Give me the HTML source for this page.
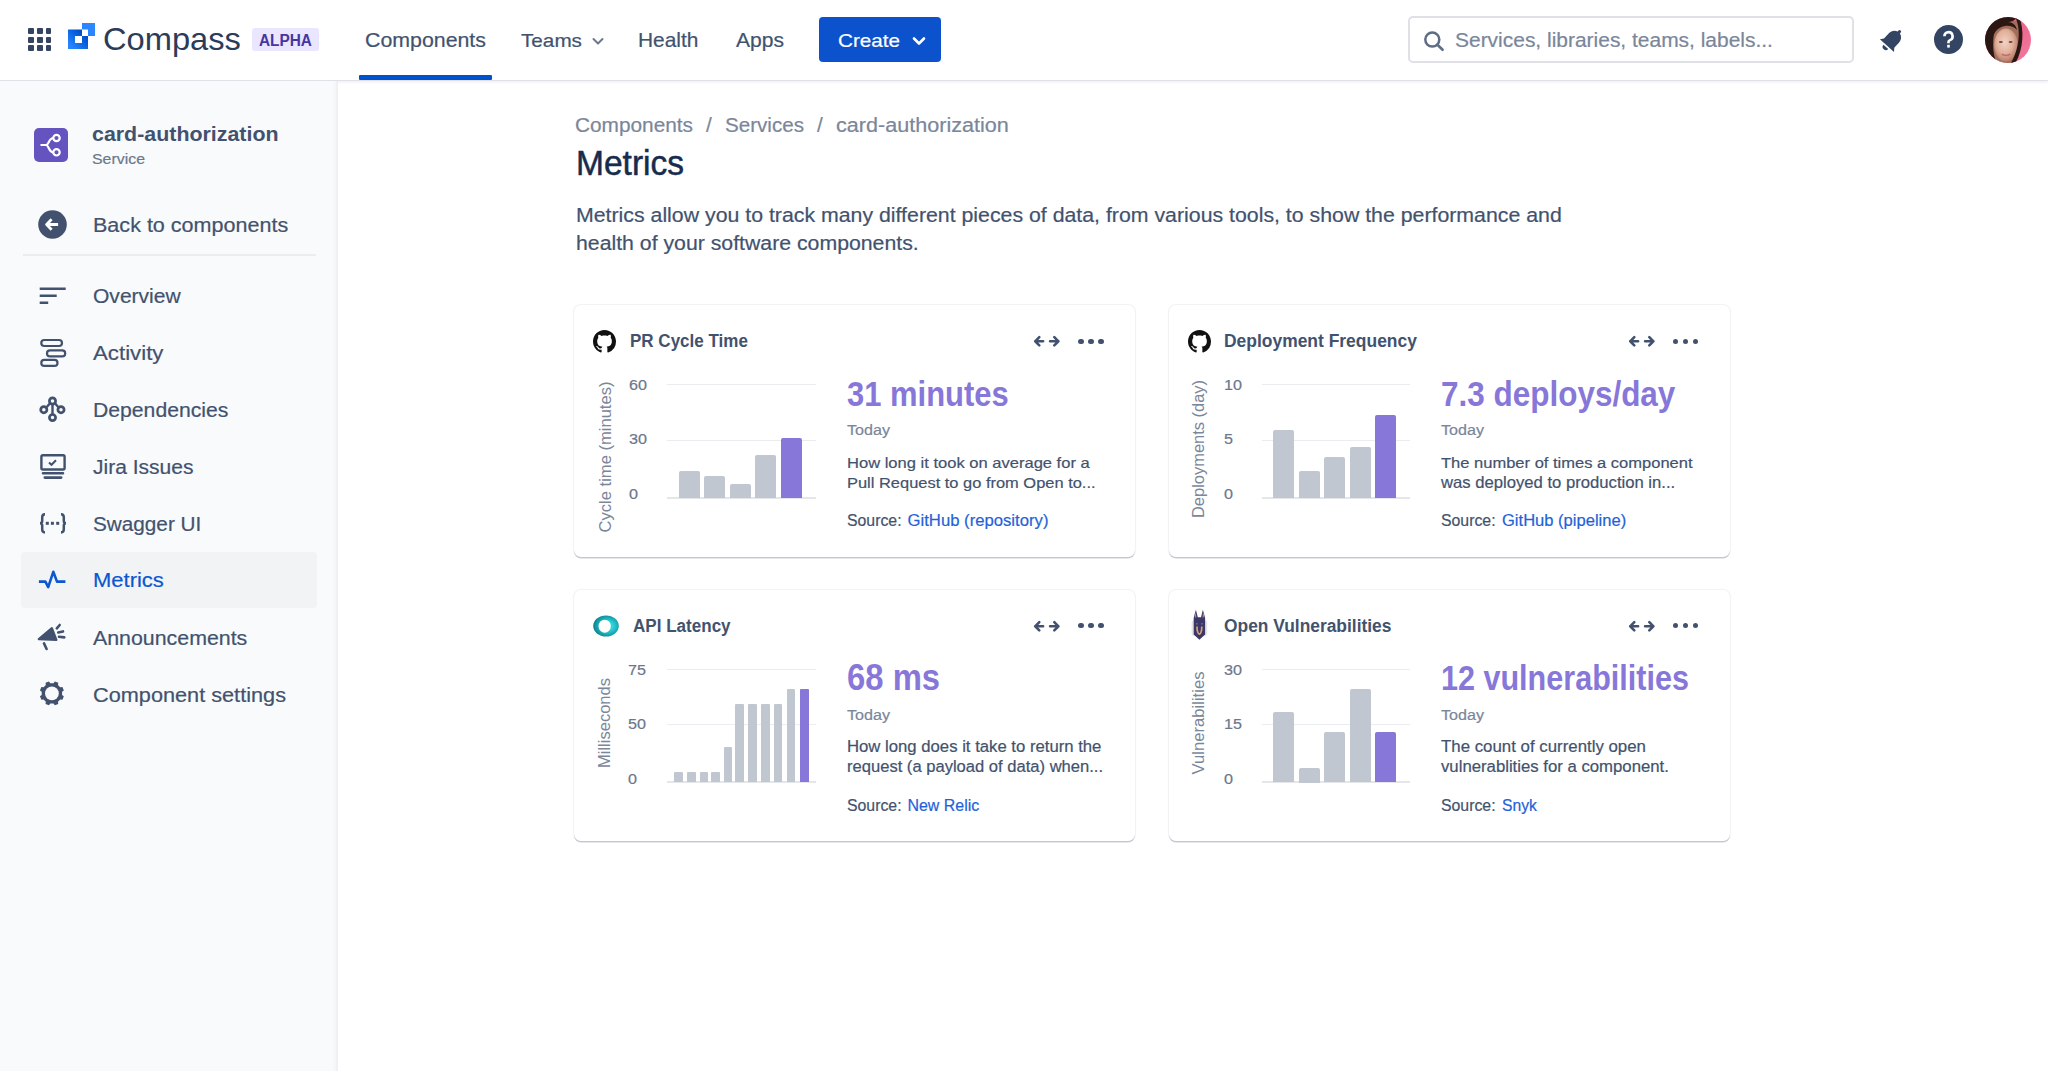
<!DOCTYPE html>
<html><head><meta charset="utf-8"><title>Compass - Metrics</title><style>
html,body{margin:0;padding:0;}
body{width:2048px;height:1071px;position:relative;overflow:hidden;background:#fff;font-family:"Liberation Sans",sans-serif;}
.t{position:absolute;white-space:nowrap;line-height:1;-webkit-text-stroke:0.2px currentColor;}
.box{position:absolute;}
#hdr{position:absolute;left:0;top:0;width:2048px;height:80px;background:#fff;box-shadow:0 1px 0 #DFE1E6,0 2px 3px rgba(9,30,66,0.08);z-index:0}
#side{position:absolute;left:0;top:81px;width:338px;height:990px;background:linear-gradient(to right,#F9FAFB 0,#F9FAFB 332px,#F3F5F7 336px,#ECEEF1 337px,#EEF0F2 338px)}
.card{position:absolute;width:561px;height:252px;border-radius:7px;background:#fff;box-shadow:0 0 1px 1px rgba(9,30,66,0.06),0 1.5px 0.6px rgba(9,30,66,0.2)}
</style></head>
<body>
<div id="hdr"></div>
<div class="box" style="left:28.2px;top:28.4px;width:5.7px;height:5.7px;border-radius:1px;background:#344563"></div>
<div class="box" style="left:28.2px;top:36.9px;width:5.7px;height:5.7px;border-radius:1px;background:#344563"></div>
<div class="box" style="left:28.2px;top:45.4px;width:5.7px;height:5.7px;border-radius:1px;background:#344563"></div>
<div class="box" style="left:36.9px;top:28.4px;width:5.7px;height:5.7px;border-radius:1px;background:#344563"></div>
<div class="box" style="left:36.9px;top:36.9px;width:5.7px;height:5.7px;border-radius:1px;background:#344563"></div>
<div class="box" style="left:36.9px;top:45.4px;width:5.7px;height:5.7px;border-radius:1px;background:#344563"></div>
<div class="box" style="left:45.6px;top:28.4px;width:5.7px;height:5.7px;border-radius:1px;background:#344563"></div>
<div class="box" style="left:45.6px;top:36.9px;width:5.7px;height:5.7px;border-radius:1px;background:#344563"></div>
<div class="box" style="left:45.6px;top:45.4px;width:5.7px;height:5.7px;border-radius:1px;background:#344563"></div>
<svg class="box" style="left:66px;top:21px" width="32" height="32" viewBox="0 0 32 32">
<defs><linearGradient id="lg1" x1="0" y1="1" x2="1" y2="0"><stop offset="0.15" stop-color="#2684FF"/><stop offset="0.75" stop-color="#0052CC"/></linearGradient>
<linearGradient id="lg2" x1="0" y1="1" x2="1" y2="0"><stop offset="0" stop-color="#2684FF"/><stop offset="1" stop-color="#2E88FF"/></linearGradient></defs>
<path fill="url(#lg1)" fill-rule="evenodd" d="M2 8.5h14v6.5h6v13h-20z M9 15h7v7h-7z"/>
<path fill="url(#lg2)" d="M16 2h13v13h-7v-6.5h-6z"/>
</svg>
<div class="t" style="left:103.00px;top:23px;font-size:32.01px;color:#2B3C5A;transform:scaleX(1.0204);transform-origin:0 0;-webkit-text-stroke:0;">Compass</div>
<div class="box" style="left:252px;top:28px;width:67px;height:23px;border-radius:3px;background:#EAE6FF"></div>
<div class="t" style="left:259.00px;top:32px;font-size:17.23px;color:#4536A0;font-weight:700;-webkit-text-stroke:0;transform:scaleX(0.8929);transform-origin:0 0;">ALPHA</div>
<div class="t" style="left:365.00px;top:31px;font-size:19.85px;color:#42526E;transform:scaleX(1.0751);transform-origin:0 0;">Components</div>
<div class="box" style="left:359px;top:75px;width:133px;height:4.5px;border-radius:1px;background:#0052CC"></div>
<div class="t" style="left:521.30px;top:31px;font-size:19.26px;color:#42526E;transform:scaleX(1.0754);transform-origin:0 0;">Teams</div>
<svg class="box" style="left:590px;top:35px" width="16" height="12" viewBox="0 0 16 12"><path d="M3.5 4l4.5 4.5 4.5-4.5" stroke="#6B778C" stroke-width="2" fill="none" stroke-linecap="round" stroke-linejoin="round"/></svg>
<div class="t" style="left:638.40px;top:31px;font-size:19.44px;color:#42526E;transform:scaleX(1.0751);transform-origin:0 0;">Health</div>
<div class="t" style="left:736.00px;top:31px;font-size:19.58px;color:#42526E;transform:scaleX(1.0752);transform-origin:0 0;">Apps</div>
<div class="box" style="left:819px;top:17px;width:122px;height:45px;border-radius:4px;background:#0C52CC"></div>
<div class="t" style="left:838.00px;top:31px;font-size:19.22px;color:#FFFFFF;transform:scaleX(1.0753);transform-origin:0 0;">Create</div>
<svg class="box" style="left:911px;top:35px" width="16" height="12" viewBox="0 0 16 12"><path d="M3 3.5l5 5 5-5" stroke="#FFFFFF" stroke-width="2.6" fill="none" stroke-linecap="round" stroke-linejoin="round"/></svg>
<div class="box" style="left:1408px;top:16px;width:446px;height:47px;border:2px solid #DFE1E6;border-radius:5px;box-sizing:border-box;background:#fff"></div>
<svg class="box" style="left:1422px;top:29px" width="24" height="24" viewBox="0 0 24 24"><circle cx="10.3" cy="10.6" r="7" stroke="#5E6C84" stroke-width="2.5" fill="none"/><path d="M15.4 15.7l5.2 5.1" stroke="#5E6C84" stroke-width="2.6" stroke-linecap="round"/></svg>
<div class="t" style="left:1455.00px;top:31px;font-size:19.49px;color:#7A869A;transform:scaleX(1.0755);transform-origin:0 0;">Services, libraries, teams, labels...</div>
<svg class="box" style="left:1876px;top:24px" width="32" height="32" viewBox="0 0 32 32">
<g transform="rotate(42 16 16)"><path fill="#344563" d="M6.5 23.5h19l-2.6-3.2v-7.3c0-3.6-2.3-6.4-5.4-7.1V4.6a1.5 1.5 0 0 0-3 0v1.3c-3.1.7-5.4 3.5-5.4 7.1v7.3z"/><path fill="#344563" d="M12.8 25.2h6.4a3.2 3.2 0 0 1-6.4 0z"/></g></svg>
<svg class="box" style="left:1934px;top:25.2px" width="29" height="29" viewBox="0 0 29 29"><circle cx="14.5" cy="14.5" r="14.5" fill="#344563"/>
<path d="M10.4 11.3a4.1 4.1 0 1 1 5.6 3.8c-1 .4-1.5 1-1.5 2v1.2" stroke="#fff" stroke-width="2.6" fill="none" stroke-linecap="butt"/><rect x="13.2" y="19.8" width="2.6" height="2.8" fill="#fff"/></svg>
<svg class="box" style="left:1985px;top:17px" width="46" height="46" viewBox="0 0 46 46">
<defs><clipPath id="av"><circle cx="23" cy="23" r="23"/></clipPath>
<radialGradient id="face" cx="0.45" cy="0.42" r="0.62"><stop offset="0" stop-color="#F2D2C4"/><stop offset="0.55" stop-color="#E2B19C"/><stop offset="1" stop-color="#B07660"/></radialGradient>
<linearGradient id="pink" x1="0" y1="0" x2="1" y2="1"><stop offset="0" stop-color="#E0507A"/><stop offset="1" stop-color="#F47CA0"/></linearGradient></defs>
<g clip-path="url(#av)">
<rect width="46" height="46" fill="url(#pink)"/>
<path d="M8 4H33C35 15 34 33 28 46H8Z" fill="#A26E5C"/>
<path d="M0 0H33C30 3 27 5 22 5.5C14 6 9.5 12 8.5 20C7.5 30 8.5 40 12 46H0Z" fill="#2A1713"/>
<ellipse cx="21" cy="28" rx="11.8" ry="16.5" fill="url(#face)"/>
<path d="M8.5 18C10 9 15 5 22 5C28 5 31 8 32 13C29 9.5 25 8.5 21 8.8C15 9.5 11 13 8.5 18Z" fill="#2A1713"/>
<path d="M30 0C35.5 9 35.5 30 26 46H30.5C38.5 32 39.5 12 34 0Z" fill="#2A1713"/>
<ellipse cx="15.8" cy="25" rx="2" ry="0.9" fill="#6A4A3E"/><ellipse cx="25.6" cy="25" rx="2" ry="0.9" fill="#6A4A3E"/>
<path d="M17.5 37.5C19.5 38.6 22.5 38.6 24.5 37.5" stroke="#C66A74" stroke-width="1.8" fill="none" stroke-linecap="round"/>
</g></svg>
<div id="side"></div>
<svg class="box" style="left:34px;top:128px" width="34" height="34" viewBox="0 0 34 34"><rect width="34" height="34" rx="5" fill="#6554C0"/>
<path d="M6.5 17h5.5C15 17 14.5 10 19.5 10 M12 17C15 17 14.5 24.3 19.5 24.3" stroke="#fff" stroke-width="2.2" fill="none"/><circle cx="22.5" cy="10" r="3.2" fill="#6554C0" stroke="#fff" stroke-width="2.2"/><circle cx="22.5" cy="24.3" r="3.2" fill="#6554C0" stroke="#fff" stroke-width="2.2"/></svg>
<div class="t" style="left:92.00px;top:124px;font-size:20.11px;color:#42526E;font-weight:700;-webkit-text-stroke:0;transform:scaleX(1.0635);transform-origin:0 0;">card-authorization</div>
<div class="t" style="left:92.00px;top:151px;font-size:15.25px;color:#6B778C;transform:scaleX(1.0421);transform-origin:0 0;">Service</div>
<svg class="box" style="left:38px;top:210px" width="29" height="29" viewBox="0 0 29 29"><circle cx="14.5" cy="14.5" r="14.3" fill="#42526E"/>
<path d="M8.6 14.5h11.5 M13.6 9.3l-5 5.2 5 5.2" stroke="#fff" stroke-width="2.8" fill="none" stroke-linejoin="round"/></svg>
<div class="t" style="left:93.40px;top:215px;font-size:20.48px;color:#42526E;transform:scaleX(1.0526);transform-origin:0 0;">Back to components</div>
<div class="box" style="left:23px;top:254px;width:293px;height:2px;background:#EBECF0"></div>
<div class="box" style="left:21.3px;top:552px;width:296px;height:56px;border-radius:4px;background:#F2F3F5"></div>
<div class="t" style="left:93.40px;top:286px;font-size:20.01px;color:#42526E;transform:scaleX(1.0522);transform-origin:0 0;">Overview</div>
<div class="t" style="left:93.40px;top:342px;font-size:21.13px;color:#42526E;transform:scaleX(1.0527);transform-origin:0 0;">Activity</div>
<div class="t" style="left:93.40px;top:400px;font-size:20.11px;color:#42526E;transform:scaleX(1.0528);transform-origin:0 0;">Dependencies</div>
<div class="t" style="left:93.40px;top:457px;font-size:19.98px;color:#42526E;transform:scaleX(1.0523);transform-origin:0 0;">Jira Issues</div>
<div class="t" style="left:93.40px;top:515px;font-size:19.69px;color:#42526E;transform:scaleX(1.0527);transform-origin:0 0;">Swagger UI</div>
<div class="t" style="left:93.40px;top:570px;font-size:20.89px;color:#0B57D0;transform:scaleX(1.0525);transform-origin:0 0;">Metrics</div>
<div class="t" style="left:93.40px;top:628px;font-size:20.3px;color:#42526E;transform:scaleX(1.0527);transform-origin:0 0;">Announcements</div>
<div class="t" style="left:93.40px;top:685px;font-size:20.61px;color:#42526E;transform:scaleX(1.0528);transform-origin:0 0;">Component settings</div>
<svg class="box" style="left:36px;top:282px" width="32" height="26" viewBox="0 0 32 26">
<path d="M3.7 6.8h26 M3.7 13.7h17 M3.7 20.8h8.5" stroke="#42526E" stroke-width="2.6"/></svg>
<svg class="box" style="left:36px;top:335px" width="32" height="35" viewBox="0 0 32 35">
<rect x="5.3" y="5" width="20.7" height="6" rx="3" stroke="#42526E" stroke-width="2.2" fill="none"/>
<rect x="11" y="15.4" width="18.2" height="6" rx="3" stroke="#42526E" stroke-width="2.2" fill="none"/>
<rect x="5.3" y="24.9" width="16.2" height="6" rx="3" stroke="#42526E" stroke-width="2.2" fill="none"/></svg>
<svg class="box" style="left:36px;top:393px" width="32" height="32" viewBox="0 0 32 32">
<path d="M16.5 11v11 M14 10.3L10.6 14.3 M19 10.3L22.4 14.3" stroke="#42526E" stroke-width="2.4"/>
<circle cx="16.5" cy="8" r="3.1" fill="#F9FAFB" stroke="#42526E" stroke-width="2.7"/>
<circle cx="7.8" cy="16.7" r="3.1" fill="#F9FAFB" stroke="#42526E" stroke-width="2.7"/>
<circle cx="25" cy="16.7" r="3.1" fill="#F9FAFB" stroke="#42526E" stroke-width="2.7"/>
<circle cx="16.5" cy="24.6" r="3.1" fill="#F9FAFB" stroke="#42526E" stroke-width="2.7"/></svg>
<svg class="box" style="left:36px;top:450px" width="32" height="32" viewBox="0 0 32 32">
<rect x="5.4" y="5.2" width="23.2" height="14.3" rx="1.5" stroke="#42526E" stroke-width="2.4" fill="none"/>
<path d="M13 12.5l2.5 2.3 4.5-4.5" stroke="#42526E" stroke-width="2" fill="none"/>
<path d="M7 23.3h20 M8.8 27.6h16.4" stroke="#42526E" stroke-width="2.6" stroke-linecap="round"/></svg>
<svg class="box" style="left:36px;top:508px" width="32" height="30" viewBox="0 0 32 30">
<path d="M9 6.2C6.6 6.2 6.2 7.3 6.2 9.3V13C6.2 14.6 5.6 15.3 4 15.3 5.6 15.3 6.2 16 6.2 17.6V21.3C6.2 23.3 6.6 24.4 9 24.4 M25 6.2C27.4 6.2 27.8 7.3 27.8 9.3V13C27.8 14.6 28.4 15.3 30 15.3 28.4 15.3 27.8 16 27.8 17.6V21.3C27.8 23.3 27.4 24.4 25 24.4" stroke="#42526E" stroke-width="2.5" fill="none"/>
<rect x="9.8" y="13.8" width="3" height="3" fill="#42526E"/><rect x="14.9" y="13.8" width="3" height="3" fill="#42526E"/><rect x="20.2" y="13.8" width="3" height="3" fill="#42526E"/></svg>
<svg class="box" style="left:36px;top:566px" width="32" height="26" viewBox="0 0 32 26">
<path d="M2.9 15.6h6.5l2.8 5.6 5.1-15.4 3.7 9.8h8.4" stroke="#0B57D0" stroke-width="2.6" fill="none" stroke-linejoin="round"/></svg>
<svg class="box" style="left:36px;top:620px" width="32" height="34" viewBox="0 0 32 34">
<path d="M2.8 19.2L15.9 8.2L20.4 20z" fill="#42526E" stroke="#42526E" stroke-width="2.2" stroke-linejoin="round"/>
<path d="M8 23.4L10.6 29" stroke="#42526E" stroke-width="2.6" stroke-linecap="round"/>
<path d="M20.8 8.3L23.7 5M22.2 12.4L27 11.4M23 16.8L28.3 17.4" stroke="#42526E" stroke-width="2.6" stroke-linecap="round"/></svg>
<svg class="box" style="left:36px;top:677px" width="32" height="32" viewBox="0 0 32 32">
<g transform="translate(15.9 16.4)"><path fill="#42526E" d="M10.18 1.59 L11.94 2.96 L10.53 6.35 L8.32 6.07 L6.07 8.32 L6.35 10.53 L2.96 11.94 L1.59 10.18 L-1.59 10.18 L-2.96 11.94 L-6.35 10.53 L-6.07 8.32 L-8.32 6.07 L-10.53 6.35 L-11.94 2.96 L-10.18 1.59 L-10.18 -1.59 L-11.94 -2.96 L-10.53 -6.35 L-8.32 -6.07 L-6.07 -8.32 L-6.35 -10.53 L-2.96 -11.94 L-1.59 -10.18 L1.59 -10.18 L2.96 -11.94 L6.35 -10.53 L6.07 -8.32 L8.32 -6.07 L10.53 -6.35 L11.94 -2.96 L10.18 -1.59Z"/><circle r="6.9" fill="#F9FAFB"/></g></svg>
<div class="t" style="left:575.10px;top:116px;font-size:19.77px;color:#7A869A;transform:scaleX(1.0527);transform-origin:0 0;">Components</div>
<div class="t" style="left:706.00px;top:115px;font-size:20.8px;color:#7A869A;">/</div>
<div class="t" style="left:725.00px;top:116px;font-size:19.57px;color:#7A869A;transform:scaleX(1.0526);transform-origin:0 0;">Services</div>
<div class="t" style="left:817.00px;top:115px;font-size:20.8px;color:#7A869A;">/</div>
<div class="t" style="left:835.70px;top:115px;font-size:20.53px;color:#7A869A;transform:scaleX(1.0527);transform-origin:0 0;">card-authorization</div>
<div class="t" style="left:576.00px;top:146px;font-size:34.21px;color:#172B4D;transform:scaleX(0.9804);transform-origin:0 0;-webkit-text-stroke:0.5px #172B4D;">Metrics</div>
<div class="t" style="left:575.50px;top:205px;font-size:20.24px;color:#42526E;transform:scaleX(1.0526);transform-origin:0 0;">Metrics allow you to track many different pieces of data, from various tools, to show the performance and</div>
<div class="t" style="left:575.50px;top:233px;font-size:20.22px;color:#42526E;transform:scaleX(1.0523);transform-origin:0 0;">health of your software components.</div>
<div class="card" style="left:574px;top:305px;height:252px"></div>
<svg class="box" style="left:593px;top:330px" width="23" height="23" viewBox="0 0 16 16"><path fill="#111" d="M8 0C3.58 0 0 3.58 0 8c0 3.54 2.29 6.53 5.47 7.59.4.07.55-.17.55-.38 0-.19-.01-.82-.01-1.49-2.01.37-2.53-.49-2.69-.94-.09-.23-.48-.94-.82-1.13-.28-.15-.68-.52-.01-.53.63-.01 1.08.58 1.23.82.72 1.21 1.87.87 2.33.66.07-.52.28-.87.51-1.07-1.78-.2-3.64-.89-3.64-3.95 0-.87.31-1.59.82-2.15-.08-.2-.36-1.02.08-2.12 0 0 .67-.21 2.2.82.64-.18 1.32-.27 2-.27.68 0 1.36.09 2 .27 1.53-1.04 2.2-.82 2.2-.82.44 1.1.16 1.92.08 2.12.51.56.82 1.27.82 2.15 0 3.07-1.87 3.75-3.65 3.95.29.25.54.73.54 1.48 0 1.07-.01 1.93-.01 2.2 0 .21.15.46.55.38A8.013 8.013 0 0016 8c0-4.42-3.58-8-8-8z"/></svg>
<div class="t" style="left:629.60px;top:333px;font-size:17.88px;color:#42526E;font-weight:700;-webkit-text-stroke:0;transform:scaleX(0.9523);transform-origin:0 0;">PR Cycle Time</div>
<svg class="box" style="left:1032px;top:334px" width="30" height="15" viewBox="0 0 30 15">
<path d="M3.2 7.3h7.9 M7.3 3.2l-4.1 4.1 4.1 4.1 M26.4 7.3h-8.3 M22.3 3.2l4.1 4.1-4.1 4.1" stroke="#42526E" stroke-width="2.6" fill="none" stroke-linecap="round" stroke-linejoin="round"/></svg>
<div class="box" style="left:1078.4px;top:338.5px;width:5.2px;height:5.2px;border-radius:50%;background:#42526E"></div>
<div class="box" style="left:1088.4px;top:338.5px;width:5.2px;height:5.2px;border-radius:50%;background:#42526E"></div>
<div class="box" style="left:1098.4px;top:338.5px;width:5.2px;height:5.2px;border-radius:50%;background:#42526E"></div>
<div class="t" style="left:605.5px;top:456.5px;font-size:15.74px;color:#7A869A;-webkit-text-stroke:0;transform:translate(-50%,-50%) rotate(-90deg) scaleX(1.0526);">Cycle time (minutes)</div>
<div class="t" style="left:629.20px;top:377px;font-size:15.4px;color:#6B778C;transform:scaleX(1.0500);transform-origin:0 0;">60</div>
<div class="t" style="left:629.20px;top:431px;font-size:15.4px;color:#6B778C;transform:scaleX(1.0500);transform-origin:0 0;">30</div>
<div class="t" style="left:629.20px;top:486px;font-size:15.4px;color:#6B778C;transform:scaleX(1.0500);transform-origin:0 0;">0</div>
<div class="box" style="left:667.4px;top:384px;width:148.6px;height:1.2px;background:#EBECF0"></div>
<div class="box" style="left:667.4px;top:439.5px;width:148.6px;height:1.2px;background:#EBECF0"></div>
<div class="box" style="left:667.4px;top:496.5px;width:148.6px;height:2.2px;background:#E4E6EA"></div>
<div class="box" style="left:678.8px;top:470.9px;width:21.2px;height:27.099999999999994px;background:#C1C7D0;border-radius:2px 2px 0 0"></div>
<div class="box" style="left:704.3px;top:476.3px;width:21.2px;height:21.69999999999999px;background:#C1C7D0;border-radius:2px 2px 0 0"></div>
<div class="box" style="left:729.8px;top:483.5px;width:21.2px;height:14.5px;background:#C1C7D0;border-radius:2px 2px 0 0"></div>
<div class="box" style="left:755.2px;top:455px;width:21.2px;height:43px;background:#C1C7D0;border-radius:2px 2px 0 0"></div>
<div class="box" style="left:780.7px;top:438.1px;width:21.2px;height:59.900000000000006px;background:#8777D9;border-radius:2px 2px 0 0"></div>
<div class="t" style="left:846.80px;top:377px;font-size:34.66px;color:#8777D9;font-weight:700;-webkit-text-stroke:0;transform:scaleX(0.8929);transform-origin:0 0;">31 minutes</div>
<div class="t" style="left:846.80px;top:422px;font-size:15.29px;color:#7A869A;transform:scaleX(1.0533);transform-origin:0 0;">Today</div>
<div class="t" style="left:846.80px;top:455px;font-size:15.56px;color:#42526E;transform:scaleX(1.0638);transform-origin:0 0;">How long it took on average for a</div>
<div class="t" style="left:846.80px;top:475px;font-size:15.46px;color:#42526E;transform:scaleX(1.0639);transform-origin:0 0;">Pull Request to go from Open to...</div>
<div class="t" style="left:846.80px;top:513px;font-size:16.8px;color:#42526E;transform:scaleX(0.9434);transform-origin:0 0;">Source:</div>
<div class="t" style="left:907.50px;top:513px;font-size:16.7px;color:#1F62D8;">GitHub (repository)</div>
<div class="card" style="left:1168.5px;top:305px;height:252px"></div>
<svg class="box" style="left:1187.5px;top:330px" width="23" height="23" viewBox="0 0 16 16"><path fill="#111" d="M8 0C3.58 0 0 3.58 0 8c0 3.54 2.29 6.53 5.47 7.59.4.07.55-.17.55-.38 0-.19-.01-.82-.01-1.49-2.01.37-2.53-.49-2.69-.94-.09-.23-.48-.94-.82-1.13-.28-.15-.68-.52-.01-.53.63-.01 1.08.58 1.23.82.72 1.21 1.87.87 2.33.66.07-.52.28-.87.51-1.07-1.78-.2-3.64-.89-3.64-3.95 0-.87.31-1.59.82-2.15-.08-.2-.36-1.02.08-2.12 0 0 .67-.21 2.2.82.64-.18 1.32-.27 2-.27.68 0 1.36.09 2 .27 1.53-1.04 2.2-.82 2.2-.82.44 1.1.16 1.92.08 2.12.51.56.82 1.27.82 2.15 0 3.07-1.87 3.75-3.65 3.95.29.25.54.73.54 1.48 0 1.07-.01 1.93-.01 2.2 0 .21.15.46.55.38A8.013 8.013 0 0016 8c0-4.42-3.58-8-8-8z"/></svg>
<div class="t" style="left:1224.10px;top:332px;font-size:18.32px;color:#42526E;font-weight:700;-webkit-text-stroke:0;transform:scaleX(0.9525);transform-origin:0 0;">Deployment Frequency</div>
<svg class="box" style="left:1626.5px;top:334px" width="30" height="15" viewBox="0 0 30 15">
<path d="M3.2 7.3h7.9 M7.3 3.2l-4.1 4.1 4.1 4.1 M26.4 7.3h-8.3 M22.3 3.2l4.1 4.1-4.1 4.1" stroke="#42526E" stroke-width="2.6" fill="none" stroke-linecap="round" stroke-linejoin="round"/></svg>
<div class="box" style="left:1672.9px;top:338.5px;width:5.2px;height:5.2px;border-radius:50%;background:#42526E"></div>
<div class="box" style="left:1682.9px;top:338.5px;width:5.2px;height:5.2px;border-radius:50%;background:#42526E"></div>
<div class="box" style="left:1692.9px;top:338.5px;width:5.2px;height:5.2px;border-radius:50%;background:#42526E"></div>
<div class="t" style="left:1198.8px;top:449px;font-size:15.63px;color:#7A869A;-webkit-text-stroke:0;transform:translate(-50%,-50%) rotate(-90deg) scaleX(1.0526);">Deployments (day)</div>
<div class="t" style="left:1223.70px;top:377px;font-size:15.4px;color:#6B778C;transform:scaleX(1.0500);transform-origin:0 0;">10</div>
<div class="t" style="left:1223.70px;top:431px;font-size:15.4px;color:#6B778C;transform:scaleX(1.0500);transform-origin:0 0;">5</div>
<div class="t" style="left:1223.70px;top:486px;font-size:15.4px;color:#6B778C;transform:scaleX(1.0500);transform-origin:0 0;">0</div>
<div class="box" style="left:1261.9px;top:384px;width:148.6px;height:1.2px;background:#EBECF0"></div>
<div class="box" style="left:1261.9px;top:439.5px;width:148.6px;height:1.2px;background:#EBECF0"></div>
<div class="box" style="left:1261.9px;top:496.5px;width:148.6px;height:2.2px;background:#E4E6EA"></div>
<div class="box" style="left:1273.3px;top:429.7px;width:21.2px;height:68.3px;background:#C1C7D0;border-radius:2px 2px 0 0"></div>
<div class="box" style="left:1298.8px;top:470.9px;width:21.2px;height:27.099999999999994px;background:#C1C7D0;border-radius:2px 2px 0 0"></div>
<div class="box" style="left:1324.3px;top:456.6px;width:21.2px;height:41.400000000000006px;background:#C1C7D0;border-radius:2px 2px 0 0"></div>
<div class="box" style="left:1349.7px;top:446.8px;width:21.2px;height:51.19999999999999px;background:#C1C7D0;border-radius:2px 2px 0 0"></div>
<div class="box" style="left:1375.2px;top:415px;width:21.2px;height:83px;background:#8777D9;border-radius:2px 2px 0 0"></div>
<div class="t" style="left:1441.30px;top:376px;font-size:35.26px;color:#8777D9;font-weight:700;-webkit-text-stroke:0;transform:scaleX(0.8927);transform-origin:0 0;">7.3 deploys/day</div>
<div class="t" style="left:1441.30px;top:422px;font-size:15.29px;color:#7A869A;transform:scaleX(1.0533);transform-origin:0 0;">Today</div>
<div class="t" style="left:1441.30px;top:455px;font-size:15.54px;color:#42526E;transform:scaleX(1.0635);transform-origin:0 0;">The number of times a component</div>
<div class="t" style="left:1441.38px;top:475px;font-size:15.67px;color:#42526E;transform:scaleX(1.0636);transform-origin:0 0;">was deployed to production in...</div>
<div class="t" style="left:1441.30px;top:513px;font-size:16.8px;color:#42526E;transform:scaleX(0.9434);transform-origin:0 0;">Source:</div>
<div class="t" style="left:1502.00px;top:513px;font-size:16.56px;color:#1F62D8;">GitHub (pipeline)</div>
<div class="card" style="left:574px;top:589.5px;height:251.5px"></div>
<svg class="box" style="left:593px;top:614.5px" width="27" height="22" viewBox="0 0 27 22">
<defs><radialGradient id="nrg" cx="0.58" cy="0.5" r="0.55"><stop offset="0.35" stop-color="#2FD3DA"/><stop offset="0.62" stop-color="#1FB6C0"/><stop offset="1" stop-color="#0E8792"/></radialGradient></defs>
<ellipse cx="13" cy="11" rx="12.8" ry="10.5" fill="url(#nrg)"/><ellipse cx="11.7" cy="11.2" rx="6.1" ry="6.5" fill="#fff"/></svg>
<div class="t" style="left:632.60px;top:618px;font-size:17.92px;color:#42526E;font-weight:700;-webkit-text-stroke:0;transform:scaleX(0.9523);transform-origin:0 0;">API Latency</div>
<svg class="box" style="left:1032px;top:618.5px" width="30" height="15" viewBox="0 0 30 15">
<path d="M3.2 7.3h7.9 M7.3 3.2l-4.1 4.1 4.1 4.1 M26.4 7.3h-8.3 M22.3 3.2l4.1 4.1-4.1 4.1" stroke="#42526E" stroke-width="2.6" fill="none" stroke-linecap="round" stroke-linejoin="round"/></svg>
<div class="box" style="left:1078.4px;top:623.0px;width:5.2px;height:5.2px;border-radius:50%;background:#42526E"></div>
<div class="box" style="left:1088.4px;top:623.0px;width:5.2px;height:5.2px;border-radius:50%;background:#42526E"></div>
<div class="box" style="left:1098.4px;top:623.0px;width:5.2px;height:5.2px;border-radius:50%;background:#42526E"></div>
<div class="t" style="left:605px;top:723.0px;font-size:15.70px;color:#7A869A;-webkit-text-stroke:0;transform:translate(-50%,-50%) rotate(-90deg) scaleX(1.0526);">Milliseconds</div>
<div class="t" style="left:627.70px;top:662px;font-size:15.4px;color:#6B778C;transform:scaleX(1.0500);transform-origin:0 0;">75</div>
<div class="t" style="left:627.70px;top:716px;font-size:15.4px;color:#6B778C;transform:scaleX(1.0500);transform-origin:0 0;">50</div>
<div class="t" style="left:627.70px;top:771px;font-size:15.4px;color:#6B778C;transform:scaleX(1.0500);transform-origin:0 0;">0</div>
<div class="box" style="left:667.4px;top:668.5px;width:148.6px;height:1.2px;background:#EBECF0"></div>
<div class="box" style="left:667.4px;top:724.0px;width:148.6px;height:1.2px;background:#EBECF0"></div>
<div class="box" style="left:667.4px;top:781.0px;width:148.6px;height:2.2px;background:#E4E6EA"></div>
<div class="box" style="left:674.2px;top:771.7px;width:8.6px;height:10.800000000000011px;background:#C1C7D0;border-radius:1px 1px 0 0"></div>
<div class="box" style="left:687px;top:771.7px;width:8.6px;height:10.800000000000011px;background:#C1C7D0;border-radius:1px 1px 0 0"></div>
<div class="box" style="left:699.6px;top:771.7px;width:8.6px;height:10.800000000000011px;background:#C1C7D0;border-radius:1px 1px 0 0"></div>
<div class="box" style="left:711.2px;top:771.7px;width:8.6px;height:10.800000000000011px;background:#C1C7D0;border-radius:1px 1px 0 0"></div>
<div class="box" style="left:723.8px;top:747.2px;width:8.6px;height:35.30000000000001px;background:#C1C7D0;border-radius:1px 1px 0 0"></div>
<div class="box" style="left:735.4px;top:703.6px;width:8.6px;height:78.9px;background:#C1C7D0;border-radius:1px 1px 0 0"></div>
<div class="box" style="left:748px;top:703.6px;width:8.6px;height:78.9px;background:#C1C7D0;border-radius:1px 1px 0 0"></div>
<div class="box" style="left:761.2px;top:703.6px;width:8.6px;height:78.9px;background:#C1C7D0;border-radius:1px 1px 0 0"></div>
<div class="box" style="left:773.8px;top:703.6px;width:8.6px;height:78.9px;background:#C1C7D0;border-radius:1px 1px 0 0"></div>
<div class="box" style="left:786.5px;top:689.2px;width:8.6px;height:93.3px;background:#C1C7D0;border-radius:1px 1px 0 0"></div>
<div class="box" style="left:800.2px;top:689.2px;width:8.6px;height:93.3px;background:#8777D9;border-radius:1px 1px 0 0"></div>
<div class="t" style="left:846.80px;top:660px;font-size:36.78px;color:#8777D9;font-weight:700;-webkit-text-stroke:0;transform:scaleX(0.8929);transform-origin:0 0;">68 ms</div>
<div class="t" style="left:846.80px;top:707px;font-size:15.29px;color:#7A869A;transform:scaleX(1.0533);transform-origin:0 0;">Today</div>
<div class="t" style="left:846.80px;top:739px;font-size:15.71px;color:#42526E;transform:scaleX(1.0637);transform-origin:0 0;">How long does it take to return the</div>
<div class="t" style="left:846.80px;top:759px;font-size:15.59px;color:#42526E;transform:scaleX(1.0637);transform-origin:0 0;">request (a payload of data) when...</div>
<div class="t" style="left:846.80px;top:798px;font-size:16.8px;color:#42526E;transform:scaleX(0.9434);transform-origin:0 0;">Source:</div>
<div class="t" style="left:907.50px;top:798px;font-size:15.93px;color:#1F62D8;">New Relic</div>
<div class="card" style="left:1168.5px;top:589.5px;height:251.5px"></div>
<svg class="box" style="left:1189.5px;top:608.5px" width="19" height="32" viewBox="0 0 19 32">
<rect x="1.6" y="11" width="15.6" height="16" rx="3" fill="#E4E4E6"/>
<path d="M3.7 9L5.9 0.8L7.8 8.3H11L12.9 0.8L15.1 9V25.5L9.4 30.8L3.7 25.5Z" fill="#3B3768"/>
<path d="M5.3 4.5L5.7 8.5M13.5 4.5L13.1 8.5" stroke="#B98A5E" stroke-width="1.3"/>
<ellipse cx="6.9" cy="14.8" rx="1.1" ry="0.6" fill="#9C7A62"/><ellipse cx="11.9" cy="14.8" rx="1.1" ry="0.6" fill="#9C7A62"/>
<path d="M7 17.5Q7 24.3 9.4 25.2Q11.8 24.3 11.8 17.5" stroke="#D6A070" stroke-width="1.7" fill="none"/></svg>
<div class="t" style="left:1224.10px;top:617px;font-size:18.25px;color:#42526E;font-weight:700;-webkit-text-stroke:0;transform:scaleX(0.9525);transform-origin:0 0;">Open Vulnerabilities</div>
<svg class="box" style="left:1626.5px;top:618.5px" width="30" height="15" viewBox="0 0 30 15">
<path d="M3.2 7.3h7.9 M7.3 3.2l-4.1 4.1 4.1 4.1 M26.4 7.3h-8.3 M22.3 3.2l4.1 4.1-4.1 4.1" stroke="#42526E" stroke-width="2.6" fill="none" stroke-linecap="round" stroke-linejoin="round"/></svg>
<div class="box" style="left:1672.9px;top:623.0px;width:5.2px;height:5.2px;border-radius:50%;background:#42526E"></div>
<div class="box" style="left:1682.9px;top:623.0px;width:5.2px;height:5.2px;border-radius:50%;background:#42526E"></div>
<div class="box" style="left:1692.9px;top:623.0px;width:5.2px;height:5.2px;border-radius:50%;background:#42526E"></div>
<div class="t" style="left:1199.4px;top:723.0px;font-size:15.81px;color:#7A869A;-webkit-text-stroke:0;transform:translate(-50%,-50%) rotate(-90deg) scaleX(1.0526);">Vulnerabilities</div>
<div class="t" style="left:1223.70px;top:662px;font-size:15.4px;color:#6B778C;transform:scaleX(1.0500);transform-origin:0 0;">30</div>
<div class="t" style="left:1223.70px;top:716px;font-size:15.4px;color:#6B778C;transform:scaleX(1.0500);transform-origin:0 0;">15</div>
<div class="t" style="left:1223.70px;top:771px;font-size:15.4px;color:#6B778C;transform:scaleX(1.0500);transform-origin:0 0;">0</div>
<div class="box" style="left:1261.9px;top:668.5px;width:148.6px;height:1.2px;background:#EBECF0"></div>
<div class="box" style="left:1261.9px;top:724.0px;width:148.6px;height:1.2px;background:#EBECF0"></div>
<div class="box" style="left:1261.9px;top:781.0px;width:148.6px;height:2.2px;background:#E4E6EA"></div>
<div class="box" style="left:1273.3px;top:712.2px;width:21.2px;height:70.3px;background:#C1C7D0;border-radius:2px 2px 0 0"></div>
<div class="box" style="left:1298.8px;top:767.5px;width:21.2px;height:15px;background:#C1C7D0;border-radius:2px 2px 0 0"></div>
<div class="box" style="left:1324.3px;top:732.2px;width:21.2px;height:50.30000000000001px;background:#C1C7D0;border-radius:2px 2px 0 0"></div>
<div class="box" style="left:1349.7px;top:689.2px;width:21.2px;height:93.3px;background:#C1C7D0;border-radius:2px 2px 0 0"></div>
<div class="box" style="left:1375.2px;top:732.2px;width:21.2px;height:50.30000000000001px;background:#8777D9;border-radius:2px 2px 0 0"></div>
<div class="t" style="left:1441.30px;top:661px;font-size:34.23px;color:#8777D9;font-weight:700;-webkit-text-stroke:0;transform:scaleX(0.8928);transform-origin:0 0;">12 vulnerabilities</div>
<div class="t" style="left:1441.30px;top:707px;font-size:15.29px;color:#7A869A;transform:scaleX(1.0533);transform-origin:0 0;">Today</div>
<div class="t" style="left:1441.30px;top:739px;font-size:15.83px;color:#42526E;transform:scaleX(1.0637);transform-origin:0 0;">The count of currently open</div>
<div class="t" style="left:1441.30px;top:759px;font-size:15.74px;color:#42526E;transform:scaleX(1.0635);transform-origin:0 0;">vulnerablities for a component.</div>
<div class="t" style="left:1441.30px;top:798px;font-size:16.8px;color:#42526E;transform:scaleX(0.9434);transform-origin:0 0;">Source:</div>
<div class="t" style="left:1502.00px;top:798px;font-size:15.7px;color:#1F62D8;">Snyk</div>
</body></html>
